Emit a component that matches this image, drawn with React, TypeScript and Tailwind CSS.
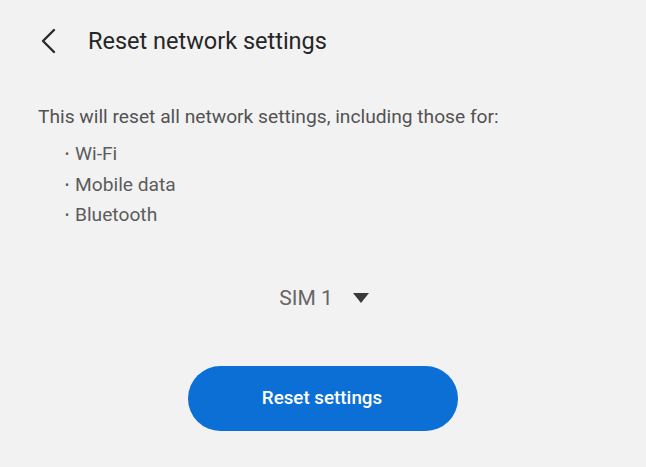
import React from 'react';

const items = ['Wi-Fi', 'Mobile data', 'Bluetooth'];

export default function App() {
  return (
    <div className="w-[646px] h-[467px] bg-[#f2f2f2] overflow-hidden" style={{ fontFamily: 'Roboto, sans-serif' }}>
      <header className="h-[84px] flex items-center pl-[38px]">
        <svg width="22" height="28" viewBox="0 0 22 28" className="mt-[-2px]">
          <path d="M16 3 L5 14 L16 25" fill="none" stroke="#2a2a2a" strokeWidth="2.4" strokeLinecap="round" strokeLinejoin="round" />
        </svg>
        <h1 className="ml-[28px] text-[23.5px] text-[#262626]">Reset network settings</h1>
      </header>
      <div className="pl-[38px] pt-[20px]">
        <p className="text-[19.2px] leading-[26px] text-[#525252]">
          This will reset all network settings, including those for:
        </p>
        <ul className="mt-[9px] pl-[27px]">
          {items.map((item) => (
            <li key={item} className="flex items-center text-[19.2px] leading-[30.5px] text-[#5c5c5c]">
              <span className="w-[10px] text-[12px]">•</span>
              {item}
            </li>
          ))}
        </ul>
      </div>
      <div className="mt-[52px] flex justify-center items-center gap-[20px] pl-[2px]">
        <span className="text-[21px] text-[#666]">SIM 1</span>
        <svg width="16" height="11" viewBox="0 0 16 11">
          <path d="M0 0 H16 L8 10 Z" fill="#3a3a3a" />
        </svg>
      </div>
      <div className="mt-[52px] flex justify-center">
        <button className="w-[270px] h-[65px] rounded-full bg-[#0b6fd6] text-white text-[18.8px] font-medium pr-[2px]">
          Reset settings
        </button>
      </div>
    </div>
  );
}
